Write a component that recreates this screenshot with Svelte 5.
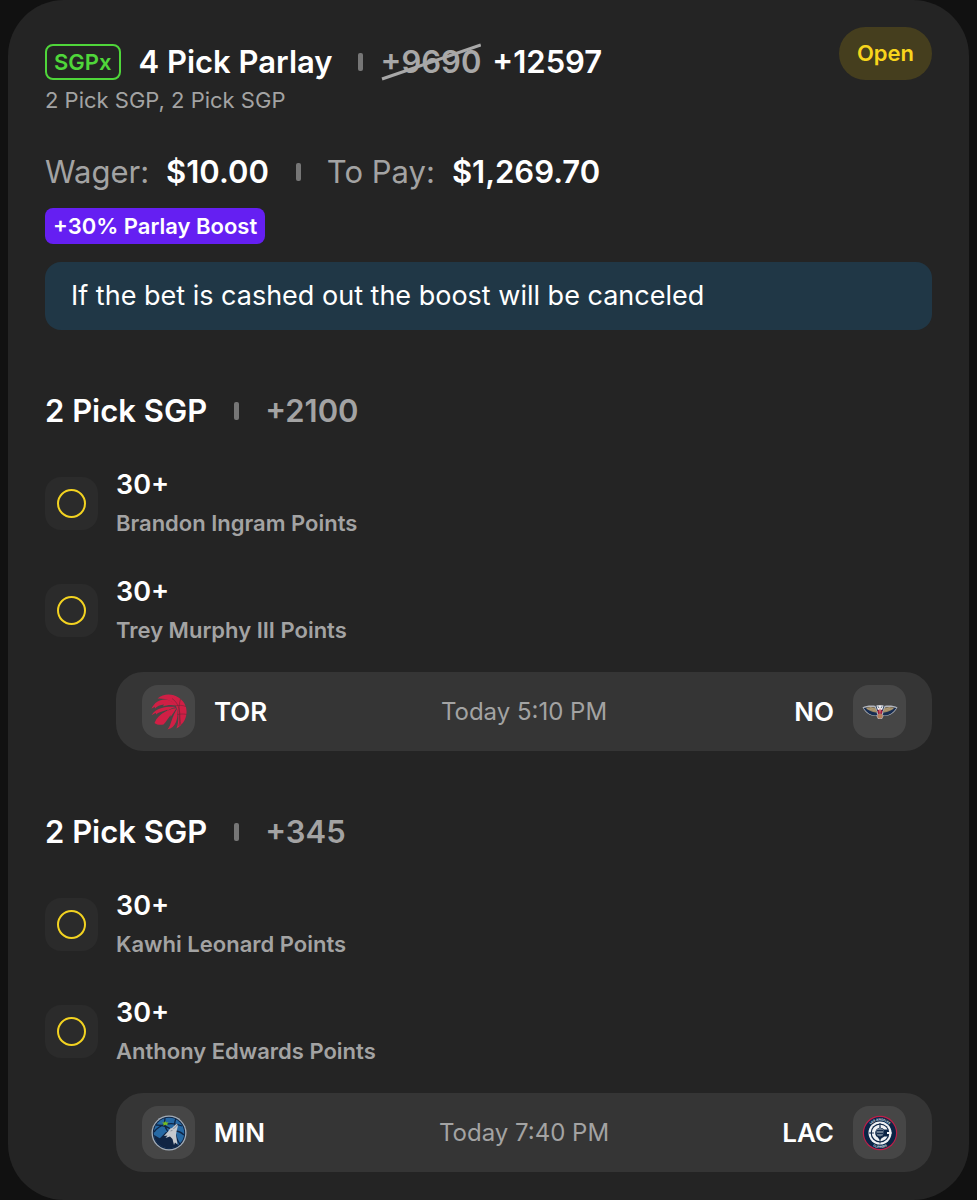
<script lang="ts">
	type Leg = { line: string; market: string };
	type Group = { title: string; odds: string; legs: Leg[]; away: string; home: string; time: string };

	let groups = $state<Group[]>([
		{
			title: '2 Pick SGP',
			odds: '+2100',
			legs: [
				{ line: '30+', market: 'Brandon Ingram Points' },
				{ line: '30+', market: 'Trey Murphy III Points' }
			],
			away: 'TOR',
			home: 'NO',
			time: 'Today 5:10 PM'
		},
		{
			title: '2 Pick SGP',
			odds: '+345',
			legs: [
				{ line: '30+', market: 'Kawhi Leonard Points' },
				{ line: '30+', market: 'Anthony Edwards Points' }
			],
			away: 'MIN',
			home: 'LAC',
			time: 'Today 7:40 PM'
		}
	]);
</script>

{#snippet logo(team: string)}
	<span class="tile">
		<svg viewBox="0 0 36 36" aria-hidden="true">
			{#if team === 'TOR'}
				<g fill="#d01f45">
					<path d="M6.500 4.500C12-.3 21-1 27.500 3.500 33 7 36 12.500 35.500 19c-.5 7-4.500 12.500-10 15.500C28 27 28 19 25 12.500 22 7 14.500 3.800 6.500 4.500z" />
					<path d="M.5 14.800C3 9 8 5.500 13.500 5.500c5 0 9 2.500 11 6-5-1.200-8.500-.4-12.500.8l1-1.800C9 11.300 6 12 4 14.500l-.3-1.700z" />
					<path d="M.5 21.300C2.500 17.500 6 15.300 10 14.200c5-1.400 9.500-1.700 15-1.200-3 .7-6.500 2.300-9 4l.5-1.300C12 17.500 8.500 17.500 5 20.500l-.2-1.700z" />
					<path d="M3.500 29C5.500 24 9.500 19.800 15 17.300c3.500-1.600 6.500-2.800 10.500-3-2 3.200-4 6-6 8.600l.2-2C17 24 15.500 27.500 12.500 30.500c-3 .7-6.700.5-9-1.500z" />
					<path d="M16.500 35.500c2.500-3 3-6 4.300-9.500 1.300-3.800 2.900-7.500 5.200-11 1 4 .7 9-1 13-1.700 4-4.500 6.800-8.500 7.500z" />
				</g>
				<path d="M24 12c4-1.200 8-.7 11 .5M26.500 20.500c3-.7 6-.6 9-.1M29.500 5c-2 7-2 16 .5 26M21 4.500c7 4.500 9.500 14 7 27.500" fill="none" stroke="#5c2936" stroke-width="0.5" />
			{:else if team === 'NO'}
				<path d="M.5 13.500C4 11.500 9.500 11 14 12l1.500-1h5L22 12c4.500-1 10-.5 13.500 1.500-3 5-7 8.500-14 8.500L20 25h-4l-1.500-3C7.500 22 3.500 18.500.5 13.500z" fill="#b3b6bd" />
				<path d="M1.500 14c3-1 7.500-1.500 11-.7l3 8C9 22 5 19 1.500 14zM34.500 14c-3-1-7.500-1.500-11-.7l-3 8c6.500.7 10.500-2.300 14-7.300z" fill="#172d52" />
				<path d="M3.500 13.800c3-.9 6.500-.9 9.500-.2l2.200 4.700C11 18.800 7 17 3.500 13.800zM32.500 13.800c-3-.9-6.500-.9-9.500-.2l-2.200 4.700c4.200.5 8.200-1.300 11.700-4.500z" fill="#9a8560" />
				<path d="M5 14.500l9.500 2.700M8 13.700l6 2M31 14.500l-9.500 2.700M28 13.700l-6 2" stroke="#c5b28c" stroke-width="0.5" />
				<path d="M14.500 11.800l2 .8 1.500-1.400 1.500 1.400 2-.8-.7 4.500L18 18l-2.800-1.700z" fill="#f1f0f0" />
				<path d="M15 15.500l2 .5 1-1.500 1 1.500 2-.5-1.200 4.500h-3.600z" fill="#a31c3c" />
				<path d="M14 12l1.700 5M22 12l-1.700 5M15.700 12.800l1.500.8M20.300 12.800l-1.500.8" stroke="#172d52" stroke-width="0.8" />
				<circle cx="18" cy="22" r="2.600" fill="#b47d5c" />
				<path d="M17.400 14.500h1.200L18 20.500z" fill="#e8d6c7" />
			{:else if team === 'MIN'}
				<circle cx="18" cy="18" r="17.500" fill="#a3adb8" />
				<circle cx="18" cy="18" r="16.200" fill="#102544" />
				<circle cx="18" cy="18" r="15.200" fill="#2669a4" />
				<path d="M3 17C9 9 20 6 31 11M5 10c8 0 13 2 17 6M14 3c-2 8 1 13 7 18M25 3.500c-3 6-1 19 4 26M33 20c-3-3-6-4-9-4" fill="none" stroke="#102544" stroke-width="1.300" />
				<path d="M2.900 20c2.500.8 4 2.500 6 3.300L15 17l9 1.500 3 12c-2.500 1.800-5.500 2.700-9 2.700C10.500 33.200 4 28 2.900 20z" fill="#102544" />
				<path d="M26 8.500l.8 3-1.200 4.500-.6 4 1.500 9.500-2.500-2-1 2.500-1.500-6-2.500-2.500-4.500 1.500 2-2.500-3.500.5 4.500-5 1.500-2.500 2-.5 2.500-2.500z" fill="#c5c9ce" />
				<path d="M26.300 9.500l-2 3-2 1.200M19.500 16l2-.7" fill="none" stroke="#596575" stroke-width="0.6" />
				<path d="M14.200 6l.9 1.600 2.400-.3-1.300 1.700.6 1.500-2.300-.7-2.300.9.4-1.900-1.600-1.400 2.300.1z" fill="#78be20" />
			{:else}
				<circle cx="18" cy="18" r="17.200" fill="#bd1e48" />
				<circle cx="18" cy="18" r="16" fill="#0b2445" />
				<path id="clips-top" d="M5.500 18a12.500 12.500 0 0 1 25 0" fill="none" />
				<path id="clips-bottom" d="M3 18a15 15 0 0 0 30 0" fill="none" />
				<text class="ring"><textPath href="#clips-top" startOffset="50%" text-anchor="middle">LOS ANGELES</textPath></text>
				<text class="ring"><textPath href="#clips-bottom" startOffset="50%" text-anchor="middle">CLIPPERS</textPath></text>
				<circle cx="18" cy="18" r="11.500" fill="#f0f2f5" />
				<circle cx="18" cy="18" r="9.400" fill="#0b2445" />
				<path d="M25.500 14.500a8.200 8.200 0 1 0 0 7h-3.300a5.200 5.200 0 1 1 0-7z" fill="#f0f2f5" />
				<path d="M25 17h4.500v2H25z" fill="#f0f2f5" />
				<path d="M18 8.500l.7 4.500 3 1.500-.4 4.500-1.600 3.500-1.700 1.500-1.700-1.500-1.600-3.500-.4-4.500 3-1.500z" fill="#697b8f" />
				<path d="M18 8v5M18 24v4.500M15 15.500h6M15 18.500h6M7 18h5" stroke="#0b2445" stroke-width="0.900" />
				<path d="M15.500 20.500l2.500 1 2.500-1-1 3-1.500 1.500-1.500-1.500z" fill="#0b2445" />
			{/if}
		</svg>
	</span>
{/snippet}

<main class="slip">
	<header>
		<div class="title-row">
			<span class="sgp">SGPx</span>
			<h1>4 Pick Parlay</h1>
			<span class="bar"></span>
			<div class="odds">
				<s>+9690<svg viewBox="0 0 100 40" preserveAspectRatio="none" aria-hidden="true"><path d="M1 37L99 3" /></svg></s>
				<b>+12597</b>
			</div>
		</div>
		<span class="status">Open</span>
	</header>
	<p class="summary">2 Pick SGP, 2 Pick SGP</p>

	<div class="stakes">
		<span class="stake">Wager: <b>$10.00</b></span>
		<span class="bar"></span>
		<span class="stake">To Pay: <b>$1,269.70</b></span>
	</div>
	<span class="boost">+30% Parlay Boost</span>
	<p class="notice">If the bet is cashed out the boost will be canceled</p>

	{#each groups as g}
		<section>
			<div class="group-head">
				<h2>{g.title}</h2>
				<span class="bar"></span>
				<span class="group-odds">{g.odds}</span>
			</div>
			<ul>
				{#each g.legs as leg}
					<li>
						<span class="tile pending"><i></i></span>
						<div>
							<h3>{leg.line}</h3>
							<p>{leg.market}</p>
						</div>
					</li>
				{/each}
			</ul>
			<div class="match">
				<div class="team">{@render logo(g.away)}{g.away}</div>
				<time>{g.time}</time>
				<div class="team home">{g.home}{@render logo(g.home)}</div>
			</div>
		</section>
	{/each}
</main>

<style>
	:global(body) { background: #111; }
	.slip {
		margin: 0 8px; padding: 27px 37px 28px; border-radius: 56px;
		background: #242424; color: #fff;
		font-family: Inter, 'Liberation Sans', sans-serif;
	}
	h1, h2, h3, p, ul { margin: 0; padding: 0; }
	h1, h2, b { font-size: 31px; line-height: 40px; font-weight: 600; }

	header { display: flex; align-items: flex-end; justify-content: space-between; }
	.title-row { display: flex; align-items: center; height: 36px; }
	.sgp {
		box-sizing: border-box; height: 36px; padding: 0 7px; margin-right: 18px;
		border: 2px solid #4fd63a; border-radius: 8px;
		color: #4fd63a; font-size: 22px; line-height: 32px; font-weight: 600;
	}
	.bar { flex: none; width: 5px; height: 18px; margin: 0 26px 0 27px; border-radius: 2px; background: #767676; }
	.title-row .bar { margin: 0 18px 0 25px; }
	.odds { display: flex; gap: 11px; }
	s { position: relative; color: #a8a8a8; font-size: 31px; line-height: 40px; font-weight: 600; text-decoration: none; }
	s svg { position: absolute; inset: 0; width: 100%; height: 100%; }
	s path { stroke: #a8a8a8; stroke-width: 3; }
	.status {
		padding: 0 18px; border-radius: 27px; background: #453e1e; color: #f8d51c;
		font-size: 22px; line-height: 53px; font-weight: 600;
	}
	.summary { margin-top: 6px; color: #a3a3a3; font-size: 22px; line-height: 28px; }

	.stakes { display: flex; align-items: center; margin: 38px 0 16px; }
	.stake { display: flex; gap: 17px; color: #a3a3a3; font-size: 31px; line-height: 40px; }
	.stake b { color: #fff; }
	.boost {
		display: block; width: fit-content; padding: 0 8px; border-radius: 8px; background: #651ff2;
		font-size: 22px; line-height: 36px; font-weight: 600;
	}
	.notice {
		margin-top: 18px; padding: 0 26px; border-radius: 16px; background: #203746;
		font-size: 27px; line-height: 68px;
	}

	section { margin-top: 61px; }
	.group-head { display: flex; align-items: center; }
	.group-odds { color: #a3a3a3; font-size: 31px; line-height: 40px; font-weight: 600; }
	ul { display: grid; gap: 39px; margin: 38px 0 28px; list-style: none; }
	li { display: flex; align-items: center; gap: 18px; }
	h3 { font-size: 27px; line-height: 32px; font-weight: 600; }
	li p { margin-top: 8px; color: #a3a3a3; font-size: 22px; line-height: 28px; font-weight: 600; }

	.tile {
		display: flex; flex: none; align-items: center; justify-content: center;
		width: 53px; height: 53px; border-radius: 16px; background: #464646;
	}
	.tile svg { width: 36px; height: 36px; }
	.pending { background: #2b2b2b; }
	.pending i { box-sizing: border-box; width: 29px; height: 29px; border: 2px solid #f3d321; border-radius: 50%; }

	.match {
		display: grid; grid-template-columns: 1fr auto 1fr; align-items: center;
		margin-left: 71px; padding: 13px 26px; border-radius: 27px; background: #353535;
	}
	.team { display: flex; align-items: center; gap: 19px; font-size: 26px; font-weight: 600; }
	.home { justify-content: flex-end; }
	time { color: #a3a3a3; font-size: 24px; line-height: 32px; }
	.ring { fill: #dfe5ed; font-size: 3px; font-weight: 700; }
</style>
